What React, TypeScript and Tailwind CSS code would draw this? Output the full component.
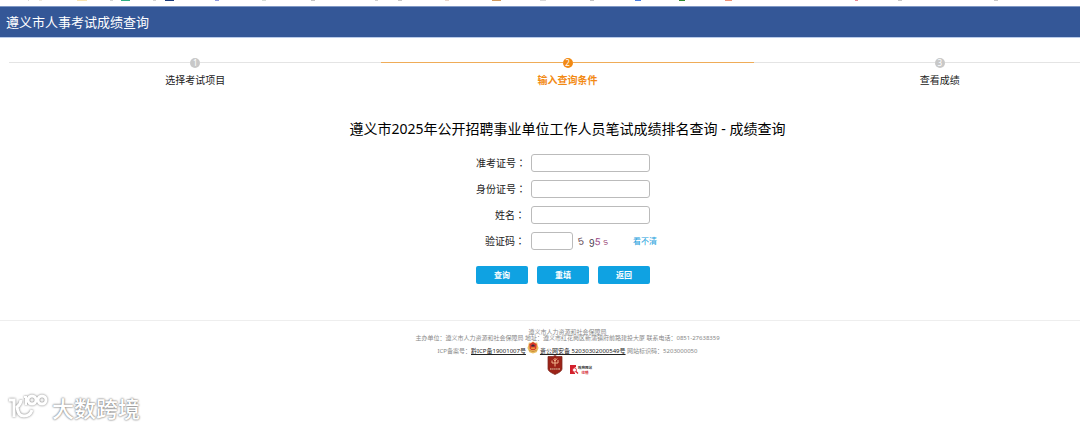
import { useState } from "react"
import clsx from "clsx"

const steps = ["选择考试项目", "输入查询条件", "查看成绩"]

const fields = [
  { id: "ticket", label: "准考证号" },
  { id: "idcard", label: "身份证号" },
  { id: "name", label: "姓名" },
]

// bottoms of the bookmark icons: x, width, colour
const marks: [number, number, string][] = [
  [28, 1, "#d8d8d8"], [39, 3, "#eee8dc"], [77, 10, "#f8e3b0"], [110, 3, "#d4d4d4"],
  [121, 9, "#2fae84"], [153, 3, "#d4d4d4"], [165, 9, "#1b3a7a"], [215, 4, "#8f9ae0"],
  [262, 4, "#d4dcd6"], [311, 4, "#c4c4c4"], [375, 3, "#d0d0d0"], [398, 4, "#c8c8c8"],
  [445, 4, "#ead6ca"], [492, 9, "#cf9a5e"], [540, 6, "#d8d8d8"], [590, 4, "#c4c4c4"],
  [635, 6, "#4a7de0"], [679, 6, "#2f8a2f"], [725, 7, "#ee9478"], [855, 3, "#e88a94"],
  [898, 4, "#c8c8c8"], [994, 4, "#c8c8c8"],
]

function Colon() {
  return <span className="font-['Noto_Sans_CJK_TC',sans-serif]" lang="zh-Hant">：</span>
}

function PoliceBadge() {
  return (
    <svg className="mx-px h-[13px] w-3 shrink-0" viewBox="0 0 24 28">
      <path d="M12 1 L16 4 L21 3 L22 9 L24 15 L20 24 L12 27 L4 24 L0 15 L2 9 L3 3 L8 4 Z" fill="#e9bd62" />
      <path d="M4 7 L12 2 L20 7 L19 16 Q16 20 12 20 Q8 20 5 16 Z" fill="#d8392a" />
      <path d="M8 10 Q12 5 16 10 L15 12 H9 Z" fill="#3a2a3c" />
      <path d="M8 14 H16 V17 H8 Z" fill="#f0a33c" />
      <path d="M4 20 Q12 26 20 20" stroke="#c99038" strokeWidth="2" fill="none" />
    </svg>
  )
}

function PartyBadge() {
  return (
    <svg className="h-5 w-4" viewBox="0 0 32 40">
      <path d="M16 1 L20 3 H30 V28 Q30 33 16 39 Q2 33 2 28 V3 H12 Z" fill="#9c2318" stroke="#7c2a20" strokeWidth="1.5" />
      <path d="M16 6 V23 M10 11 V16 H22 V10 M13 9 L16 12 L20 7" stroke="#f1b48b" strokeWidth="2" fill="none" />
      <path d="M6 26 H26 V30 H6 Z" fill="#c98068" />
      <path d="M8 28 H24" stroke="#7d1a12" strokeWidth="1.5" strokeDasharray="3 1" />
    </svg>
  )
}

function ErrorBadge() {
  return (
    <svg className="h-[11px] w-6 self-end" viewBox="0 0 48 22">
      <path d="M2 2 H14 V6 L8 9 V15 L12 18 V20 H2 Z" fill="#d3202c" />
      <circle cx="11" cy="12" r="4" fill="#fff" stroke="#d3202c" strokeWidth="1.5" />
      <path d="M14 15 L18 19" stroke="#d3202c" strokeWidth="2.5" />
      <text x="18" y="9" fontSize="7" fontWeight="700" fill="#333" fontFamily="Noto Sans CJK SC, sans-serif">政府网站</text>
      <text x="25" y="19" fontSize="7" fontWeight="700" fill="#d3202c" fontFamily="Noto Sans CJK SC, sans-serif">找错</text>
    </svg>
  )
}

function Captcha() {
  return (
    <svg className="h-4 w-14 shrink-0" viewBox="0 0 56 16" fontFamily="Liberation Sans, sans-serif" fontSize="10">
      <text x="5" y="12" fill="#6a5260" transform="rotate(-14 7 8)">5</text>
      <text x="16" y="14" fill="#4c4450">9</text>
      <text x="22" y="12" fill="#9a4a86" transform="rotate(8 24 8)">5</text>
      <text x="30" y="12" fill="#a0527c" fontSize="9" transform="rotate(-14 32 8)">s</text>
    </svg>
  )
}

function Watermark() {
  return (
    <div className="absolute bottom-1 left-2 flex items-center gap-1">
      <svg className="h-8 w-10 drop-shadow-[0_0_1px_#777]" viewBox="0 0 40 32" fill="none" stroke="#fff" strokeWidth="3">
        <path d="M1 8 H6 V25" />
        <path d="M13 8 Q13 12 9 15 Q10 24 16 24 Q22 24 24 18" />
        <path d="M16 5 H18 V13" strokeWidth="2" />
        <circle cx="24" cy="8" r="4" strokeWidth="3" />
        <circle cx="34" cy="8" r="4" strokeWidth="3" />
      </svg>
      <span className="text-[22px] leading-8 font-medium text-white [text-shadow:0_0_2px_#777,0_0_2px_#999]">大数跨境</span>
    </div>
  )
}

export default function App() {
  const [values, setValues] = useState<Record<string, string>>({})
  const [code, setCode] = useState("")

  const reset = () => { setValues({}); setCode("") }

  const btn = "h-[18px] w-[52px] rounded-xs bg-[#0fa2e2] text-[8px] leading-none font-bold text-white"
  const box = "h-[18px] shrink-0 rounded-[3px] border border-[#bbb] bg-white px-1 text-[10px] outline-none"
  const label = "w-[49px] shrink-0 text-right text-[10px] leading-4 whitespace-nowrap"

  return (
    <div className="relative min-h-screen overflow-hidden bg-white font-['Noto_Sans','Noto_Sans_CJK_SC',sans-serif] text-[#222]">
      <svg className="h-[6px] w-[1080px]" viewBox="0 0 1080 6">
        {marks.map(([x, w, c]) => (
          <rect key={x} x={x} y="0" width={w} height="1" fill={c} />
        ))}
      </svg>

      <div className="min-w-[1135px]">
        <header className="flex h-8 items-center border-t border-b border-t-[#8098c5] border-b-[#b9cbea] bg-[#345797] px-[6px]">
          <h1 className="text-[13px] leading-5 text-white">遵义市人事考试成绩查询</h1>
        </header>

        {/* Steps */}
        <ol className="mx-[9px] mt-5 grid grid-cols-3">
          {steps.map((s, i) => (
            <li key={s} className="flex flex-col items-center">
              <div className="flex w-full items-start">
                <i className={clsx("mt-1 h-px flex-1", i === 1 ? "bg-[#efac58]" : "bg-[#e4e4e4]")} />
                <span className={clsx("flex size-[10px] items-center justify-center rounded-full text-[8px] leading-none text-white", i === 1 ? "bg-[#f28a14]" : "bg-[#c8c8c8]")}>{i + 1}</span>
                <i className={clsx("mt-1 h-px flex-1", i === 1 ? "bg-[#efac58]" : "bg-[#e4e4e4]")} />
              </div>
              <span className={clsx("mt-1 text-[10px] leading-4", i === 1 && "font-bold text-[#f28a14]")}>{s}</span>
            </li>
          ))}
        </ol>

        {/* Query form */}
        <h2 className="mt-[31px] text-center text-[14px] leading-5 text-black">
          遵义市2025年公开招聘事业单位工作人员笔试成绩排名查询 - 成绩查询
        </h2>
        <form className="mx-auto mt-[15px] w-[183px]" onSubmit={(e) => e.preventDefault()}>
          <div className="flex flex-col gap-2">
            {fields.map((f) => (
              <div key={f.id} className="flex items-center gap-[6px]">
                <label htmlFor={f.id} className={label}>{f.label}<Colon /></label>
                <input
                  id={f.id}
                  className={clsx(box, "w-[119px]")}
                  value={values[f.id] ?? ""}
                  onChange={(e) => setValues({ ...values, [f.id]: e.target.value })}
                />
              </div>
            ))}
            <div className="flex items-center">
              <label htmlFor="code" className={clsx(label, "mr-[6px]")}>验证码<Colon /></label>
              <input id="code" className={clsx(box, "w-[42px]")} value={code} onChange={(e) => setCode(e.target.value)} />
              <Captcha />
              <a href="#" className="ml-1 text-[8px] leading-4 whitespace-nowrap text-[#1ba0dc]">看不清</a>
            </div>
          </div>
          <div className="mt-4 flex gap-[9px]">
            <button type="submit" className={btn}>查询</button>
            <button type="button" className={btn} onClick={reset}>重填</button>
            <button type="button" className={btn}>返回</button>
          </div>
        </form>

        <footer className="mt-9 flex flex-col items-center border-t border-[#eee] pt-2 text-[6px] leading-[6px] text-[#888]">
          <p>遵义市人力资源和社会保障局</p>
          <p>主办单位：遵义市人力资源和社会保障局 地址：遵义市红花岗区新蒲镇府前路建投大厦 联系电话：0851-27638359</p>
          <p className="flex items-end">
            <span>ICP备案号：<a href="#" className="text-[#222] underline">黔ICP备19001007号</a></span>
            <PoliceBadge />
            <span><a href="#" className="text-[#222] underline">贵公网安备 52030302000549号</a> 网站标识码：5203000050</span>
          </p>
          <div className="flex items-center gap-[6px] pt-px pl-1">
            <PartyBadge />
            <ErrorBadge />
          </div>
        </footer>
      </div>

      <Watermark />
    </div>
  )
}
